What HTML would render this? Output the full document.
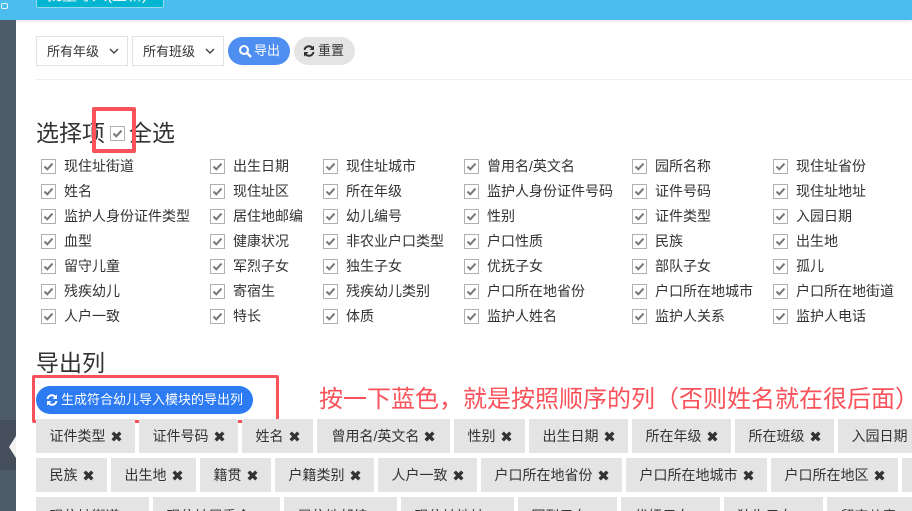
<!DOCTYPE html>
<html><head><meta charset="utf-8">
<style>
html,body{margin:0;padding:0;width:912px;height:511px;overflow:hidden;background:#fff}
body{position:relative;font-family:"Liberation Sans","Noto Sans CJK SC",sans-serif;font-size:14px;color:#333}
.a{position:absolute;white-space:nowrap}
.cb{position:absolute;width:13px;height:13px;border:1px solid #b0b0b0;background:#fff}
.cb svg{position:absolute;left:0;top:0}
.l{position:absolute;white-space:nowrap;line-height:20px;height:20px}
.t{position:absolute;height:34px;line-height:34px;background:#e4e4e4;text-align:center;white-space:nowrap;overflow:hidden;color:#333}
.r3{line-height:38px}
.t b{font-weight:700;font-size:0;display:inline-block;width:11px;height:11px;margin-left:5px;vertical-align:-1px}
.sel{position:absolute;top:36px;width:90px;height:28px;border:1px solid #e2e2e2;line-height:30px;text-indent:10px;font-size:13px}
.sel svg{position:absolute;right:8px;top:11px}
h3{margin:0;font-weight:400;font-size:23px;position:absolute;white-space:nowrap;line-height:30px;color:#333}
</style></head><body>
<svg width="0" height="0" style="position:absolute"><defs>
<symbol id="k" viewBox="0 0 13 13"><path d="M2.5 6.5 L5.3 9.3 L10.5 3.6" fill="none" stroke="#777" stroke-width="2"/></symbol>
<symbol id="x" viewBox="0 0 11 11"><path d="M1.7 1.7 L9.3 9.3 M9.3 1.7 L1.7 9.3" fill="none" stroke="#333" stroke-width="3.4"/></symbol>
</defs></svg>

<div class="a" style="left:0;top:0;width:912px;height:20px;background:#4abced;box-shadow:0 1px 4px rgba(0,0,0,.12)"></div>
<div class="a" style="left:36px;top:-3px;width:126px;height:9px;background:#00b5d1;border:1px solid #8fdcec;border-radius:2px;overflow:hidden"><span style="position:absolute;left:10px;top:-9px;color:#fff;font-size:15px;line-height:14px">批量导入(重新)</span></div>
<div class="a" style="left:1px;top:3px;width:5px;height:4px;border:1px solid #e8f6fb;border-radius:2px"></div>
<div class="a" style="left:0;top:20px;width:16px;height:491px;background:#4e5b68"></div>
<div class="a" style="left:0;top:420px;width:16px;height:50px;background:#444f5b"></div>
<svg class="a" style="left:8px;top:436px" width="8" height="22"><path d="M8 0 V22 L1 11 Z" fill="#f2f2f2"/></svg>

<div class="sel" style="left:36px">所有年级<svg width="10" height="7"><path d="M1 1 L5 5 L9 1" fill="none" stroke="#444" stroke-width="1.4"/></svg></div>
<div class="sel" style="left:132px">所有班级<svg width="10" height="7"><path d="M1 1 L5 5 L9 1" fill="none" stroke="#444" stroke-width="1.4"/></svg></div>
<div class="a" style="left:228px;top:37px;width:62px;height:28px;border-radius:14px;background:#4d8ef0;color:#fff;line-height:28px;font-size:13px">
<svg style="position:absolute;left:10px;top:7px" width="14" height="14"><circle cx="6" cy="6" r="4" fill="none" stroke="#fff" stroke-width="2"/><path d="M9 9 L13 13" stroke="#fff" stroke-width="2.4"/></svg>
<span style="position:absolute;left:26px">导出</span></div>
<div class="a" style="left:294px;top:37px;width:61px;height:28px;border-radius:14px;background:#e4e4e4;color:#333;line-height:28px;font-size:13px">
<svg style="position:absolute;left:9px;top:8px" width="12" height="12" viewBox="0 0 12 12"><path d="M1.5 5 A4.5 4.5 0 0 1 9.5 3 M10.5 7 A4.5 4.5 0 0 1 2.5 9" fill="none" stroke="#333" stroke-width="2"/><path d="M11 0.5 V5 H6.5 Z M1 11.5 V7 H5.5 Z" fill="#333"/></svg>
<span style="position:absolute;left:24px">重置</span></div>
<div class="a" style="left:36px;top:79px;width:876px;height:1px;background:#eee"></div>

<h3 style="left:36px;top:118px">选择项</h3>
<h3 style="left:129px;top:118px">全选</h3>
<div class="cb" style="left:110px;top:126px"><svg width="13" height="13"><use href="#k"/></svg></div>
<div class="a" style="left:92px;top:107px;width:36px;height:38px;border:4px solid #f9525a;border-radius:2px"></div>

<div class="cb" style="left:41px;top:159px"><svg width="13" height="13"><use href="#k"/></svg></div><div class="l" style="left:64px;top:156px">现住址街道</div>
<div class="cb" style="left:210px;top:159px"><svg width="13" height="13"><use href="#k"/></svg></div><div class="l" style="left:233px;top:156px">出生日期</div>
<div class="cb" style="left:323px;top:159px"><svg width="13" height="13"><use href="#k"/></svg></div><div class="l" style="left:346px;top:156px">现住址城市</div>
<div class="cb" style="left:464px;top:159px"><svg width="13" height="13"><use href="#k"/></svg></div><div class="l" style="left:487px;top:156px">曾用名/英文名</div>
<div class="cb" style="left:632px;top:159px"><svg width="13" height="13"><use href="#k"/></svg></div><div class="l" style="left:655px;top:156px">园所名称</div>
<div class="cb" style="left:773px;top:159px"><svg width="13" height="13"><use href="#k"/></svg></div><div class="l" style="left:796px;top:156px">现住址省份</div>

<div class="cb" style="left:41px;top:184px"><svg width="13" height="13"><use href="#k"/></svg></div><div class="l" style="left:64px;top:181px">姓名</div>
<div class="cb" style="left:210px;top:184px"><svg width="13" height="13"><use href="#k"/></svg></div><div class="l" style="left:233px;top:181px">现住址区</div>
<div class="cb" style="left:323px;top:184px"><svg width="13" height="13"><use href="#k"/></svg></div><div class="l" style="left:346px;top:181px">所在年级</div>
<div class="cb" style="left:464px;top:184px"><svg width="13" height="13"><use href="#k"/></svg></div><div class="l" style="left:487px;top:181px">监护人身份证件号码</div>
<div class="cb" style="left:632px;top:184px"><svg width="13" height="13"><use href="#k"/></svg></div><div class="l" style="left:655px;top:181px">证件号码</div>
<div class="cb" style="left:773px;top:184px"><svg width="13" height="13"><use href="#k"/></svg></div><div class="l" style="left:796px;top:181px">现住址地址</div>

<div class="cb" style="left:41px;top:209px"><svg width="13" height="13"><use href="#k"/></svg></div><div class="l" style="left:64px;top:206px">监护人身份证件类型</div>
<div class="cb" style="left:210px;top:209px"><svg width="13" height="13"><use href="#k"/></svg></div><div class="l" style="left:233px;top:206px">居住地邮编</div>
<div class="cb" style="left:323px;top:209px"><svg width="13" height="13"><use href="#k"/></svg></div><div class="l" style="left:346px;top:206px">幼儿编号</div>
<div class="cb" style="left:464px;top:209px"><svg width="13" height="13"><use href="#k"/></svg></div><div class="l" style="left:487px;top:206px">性别</div>
<div class="cb" style="left:632px;top:209px"><svg width="13" height="13"><use href="#k"/></svg></div><div class="l" style="left:655px;top:206px">证件类型</div>
<div class="cb" style="left:773px;top:209px"><svg width="13" height="13"><use href="#k"/></svg></div><div class="l" style="left:796px;top:206px">入园日期</div>

<div class="cb" style="left:41px;top:234px"><svg width="13" height="13"><use href="#k"/></svg></div><div class="l" style="left:64px;top:231px">血型</div>
<div class="cb" style="left:210px;top:234px"><svg width="13" height="13"><use href="#k"/></svg></div><div class="l" style="left:233px;top:231px">健康状况</div>
<div class="cb" style="left:323px;top:234px"><svg width="13" height="13"><use href="#k"/></svg></div><div class="l" style="left:346px;top:231px">非农业户口类型</div>
<div class="cb" style="left:464px;top:234px"><svg width="13" height="13"><use href="#k"/></svg></div><div class="l" style="left:487px;top:231px">户口性质</div>
<div class="cb" style="left:632px;top:234px"><svg width="13" height="13"><use href="#k"/></svg></div><div class="l" style="left:655px;top:231px">民族</div>
<div class="cb" style="left:773px;top:234px"><svg width="13" height="13"><use href="#k"/></svg></div><div class="l" style="left:796px;top:231px">出生地</div>

<div class="cb" style="left:41px;top:259px"><svg width="13" height="13"><use href="#k"/></svg></div><div class="l" style="left:64px;top:256px">留守儿童</div>
<div class="cb" style="left:210px;top:259px"><svg width="13" height="13"><use href="#k"/></svg></div><div class="l" style="left:233px;top:256px">军烈子女</div>
<div class="cb" style="left:323px;top:259px"><svg width="13" height="13"><use href="#k"/></svg></div><div class="l" style="left:346px;top:256px">独生子女</div>
<div class="cb" style="left:464px;top:259px"><svg width="13" height="13"><use href="#k"/></svg></div><div class="l" style="left:487px;top:256px">优抚子女</div>
<div class="cb" style="left:632px;top:259px"><svg width="13" height="13"><use href="#k"/></svg></div><div class="l" style="left:655px;top:256px">部队子女</div>
<div class="cb" style="left:773px;top:259px"><svg width="13" height="13"><use href="#k"/></svg></div><div class="l" style="left:796px;top:256px">孤儿</div>

<div class="cb" style="left:41px;top:284px"><svg width="13" height="13"><use href="#k"/></svg></div><div class="l" style="left:64px;top:281px">残疾幼儿</div>
<div class="cb" style="left:210px;top:284px"><svg width="13" height="13"><use href="#k"/></svg></div><div class="l" style="left:233px;top:281px">寄宿生</div>
<div class="cb" style="left:323px;top:284px"><svg width="13" height="13"><use href="#k"/></svg></div><div class="l" style="left:346px;top:281px">残疾幼儿类别</div>
<div class="cb" style="left:464px;top:284px"><svg width="13" height="13"><use href="#k"/></svg></div><div class="l" style="left:487px;top:281px">户口所在地省份</div>
<div class="cb" style="left:632px;top:284px"><svg width="13" height="13"><use href="#k"/></svg></div><div class="l" style="left:655px;top:281px">户口所在地城市</div>
<div class="cb" style="left:773px;top:284px"><svg width="13" height="13"><use href="#k"/></svg></div><div class="l" style="left:796px;top:281px">户口所在地街道</div>

<div class="cb" style="left:41px;top:309px"><svg width="13" height="13"><use href="#k"/></svg></div><div class="l" style="left:64px;top:306px">人户一致</div>
<div class="cb" style="left:210px;top:309px"><svg width="13" height="13"><use href="#k"/></svg></div><div class="l" style="left:233px;top:306px">特长</div>
<div class="cb" style="left:323px;top:309px"><svg width="13" height="13"><use href="#k"/></svg></div><div class="l" style="left:346px;top:306px">体质</div>
<div class="cb" style="left:464px;top:309px"><svg width="13" height="13"><use href="#k"/></svg></div><div class="l" style="left:487px;top:306px">监护人姓名</div>
<div class="cb" style="left:632px;top:309px"><svg width="13" height="13"><use href="#k"/></svg></div><div class="l" style="left:655px;top:306px">监护人关系</div>
<div class="cb" style="left:773px;top:309px"><svg width="13" height="13"><use href="#k"/></svg></div><div class="l" style="left:796px;top:306px">监护人电话</div>

<h3 style="left:36px;top:348px">导出列</h3>
<div class="a" style="left:36px;top:386px;width:217px;height:28px;border-radius:14px;background:#2c7bf2;color:#fff;line-height:28px;font-size:13px">
<svg style="position:absolute;left:10px;top:8px" width="12" height="12" viewBox="0 0 12 12"><path d="M1.5 5 A4.5 4.5 0 0 1 9.5 3 M10.5 7 A4.5 4.5 0 0 1 2.5 9" fill="none" stroke="#fff" stroke-width="2"/><path d="M11 0.5 V5 H6.5 Z M1 11.5 V7 H5.5 Z" fill="#fff"/></svg>
<span style="position:absolute;left:25px">生成符合幼儿导入模块的导出列</span></div>
<div class="a" style="left:32px;top:375px;width:241px;height:42px;border:3px solid #f9525a;border-radius:2px"></div>
<div class="a" style="left:319px;top:382px;font-size:24px;line-height:30px;color:#f9525a;font-family:'Noto Sans CJK SC',sans-serif">按一下蓝色&#xFF0C;就是按照顺序的列&#xFF08;否则姓名就在很后面&#xFF09;</div>

<div class="t" style="left:36px;top:419px;width:99px">证件类型<b><svg width="11" height="11"><use href="#x"/></svg></b></div>
<div class="t" style="left:139px;top:419px;width:99px">证件号码<b><svg width="11" height="11"><use href="#x"/></svg></b></div>
<div class="t" style="left:242px;top:419px;width:71px">姓名<b><svg width="11" height="11"><use href="#x"/></svg></b></div>
<div class="t" style="left:317px;top:419px;width:133px">曾用名/英文名<b><svg width="11" height="11"><use href="#x"/></svg></b></div>
<div class="t" style="left:454px;top:419px;width:71px">性别<b><svg width="11" height="11"><use href="#x"/></svg></b></div>
<div class="t" style="left:529px;top:419px;width:99px">出生日期<b><svg width="11" height="11"><use href="#x"/></svg></b></div>
<div class="t" style="left:632px;top:419px;width:99px">所在年级<b><svg width="11" height="11"><use href="#x"/></svg></b></div>
<div class="t" style="left:735px;top:419px;width:99px">所在班级<b><svg width="11" height="11"><use href="#x"/></svg></b></div>
<div class="t" style="left:838px;top:419px;width:99px">入园日期<b><svg width="11" height="11"><use href="#x"/></svg></b></div>

<div class="t" style="left:36px;top:458px;width:71px">民族<b><svg width="11" height="11"><use href="#x"/></svg></b></div>
<div class="t" style="left:111px;top:458px;width:85px">出生地<b><svg width="11" height="11"><use href="#x"/></svg></b></div>
<div class="t" style="left:200px;top:458px;width:71px">籍贯<b><svg width="11" height="11"><use href="#x"/></svg></b></div>
<div class="t" style="left:275px;top:458px;width:99px">户籍类别<b><svg width="11" height="11"><use href="#x"/></svg></b></div>
<div class="t" style="left:378px;top:458px;width:99px">人户一致<b><svg width="11" height="11"><use href="#x"/></svg></b></div>
<div class="t" style="left:481px;top:458px;width:141px">户口所在地省份<b><svg width="11" height="11"><use href="#x"/></svg></b></div>
<div class="t" style="left:626px;top:458px;width:141px">户口所在地城市<b><svg width="11" height="11"><use href="#x"/></svg></b></div>
<div class="t" style="left:771px;top:458px;width:127px">户口所在地区<b><svg width="11" height="11"><use href="#x"/></svg></b></div>
<div class="t" style="left:902px;top:458px;width:40px"></div>

<div class="t r3" style="left:36px;top:497px;width:113px">现住址街道<b><svg width="11" height="11"><use href="#x"/></svg></b></div>
<div class="t r3" style="left:153px;top:497px;width:127px">现住址居委会<b><svg width="11" height="11"><use href="#x"/></svg></b></div>
<div class="t r3" style="left:284px;top:497px;width:113px">居住地邮编<b><svg width="11" height="11"><use href="#x"/></svg></b></div>
<div class="t r3" style="left:401px;top:497px;width:113px">现住址地址<b><svg width="11" height="11"><use href="#x"/></svg></b></div>
<div class="t r3" style="left:518px;top:497px;width:99px">军烈子女<b><svg width="11" height="11"><use href="#x"/></svg></b></div>
<div class="t r3" style="left:621px;top:497px;width:99px">优抚子女<b><svg width="11" height="11"><use href="#x"/></svg></b></div>
<div class="t r3" style="left:724px;top:497px;width:99px">独生子女<b><svg width="11" height="11"><use href="#x"/></svg></b></div>
<div class="t r3" style="left:827px;top:497px;width:99px">留守儿童<b><svg width="11" height="11"><use href="#x"/></svg></b></div>
</body></html>
